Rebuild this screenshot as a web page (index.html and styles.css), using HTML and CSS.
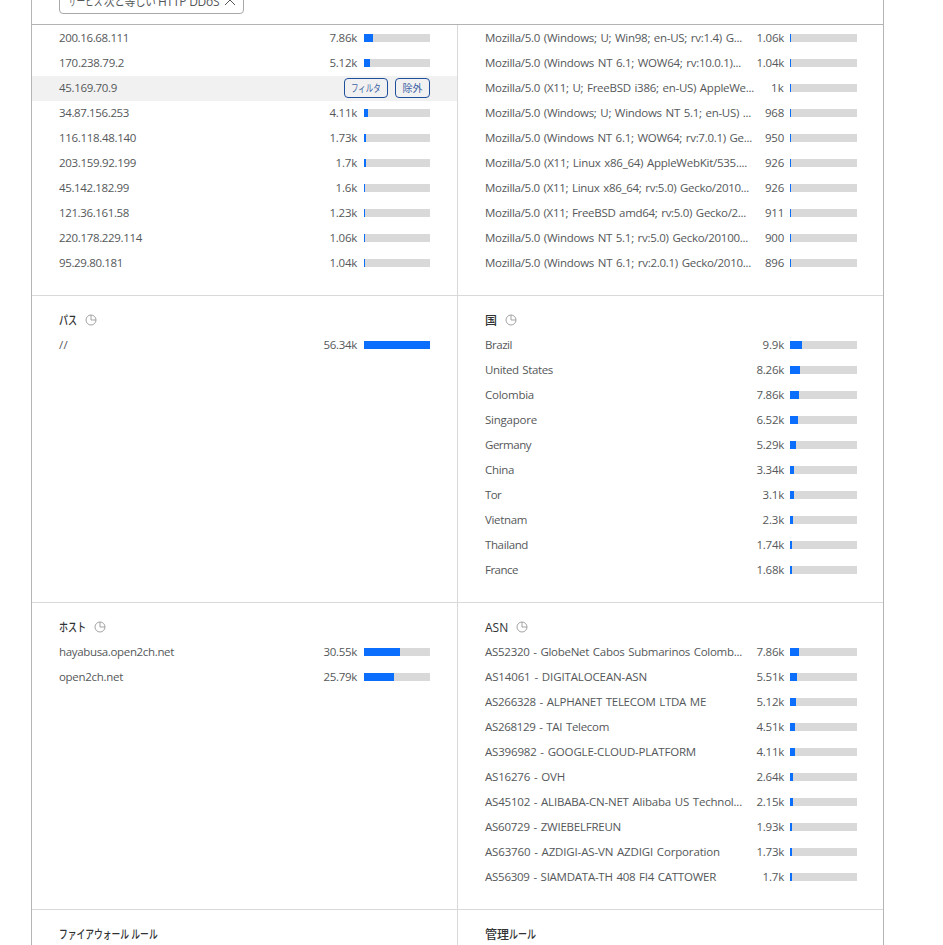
FILE: index.html
```
<!DOCTYPE html>
<html lang="ja">
<head>
<meta charset="utf-8">
<title>Firewall events</title>
<link rel="stylesheet" href="styles.css">
</head>
<body>
<main class="card">
<header class="filters"><span class="chip"><span class="chip-label"><span class="service">サービス</span><span class="operator">次と等しい</span><span>HTTP DDoS</span></span><svg class="close" viewBox="0 0 12 12"><path d="M1 1l10 10M11 1L1 11"/></svg></span></header>
<div class="grid">
<section class="panel first" data-list="ip"></section>
<section class="panel first" data-list="ua"></section>
<section class="panel" data-list="path"><h2><span class="kana path">パス</span><svg class="pie" viewBox="0 0 12 12"><circle cx="6" cy="6" r="5"/><path d="M6 1V6H11"/></svg></h2></section>
<section class="panel" data-list="country"><h2><span>国</span><svg class="pie" viewBox="0 0 12 12"><circle cx="6" cy="6" r="5"/><path d="M6 1V6H11"/></svg></h2></section>
<section class="panel" data-list="host"><h2><span class="kana host">ホスト</span><svg class="pie" viewBox="0 0 12 12"><circle cx="6" cy="6" r="5"/><path d="M6 1V6H11"/></svg></h2></section>
<section class="panel" data-list="asn"><h2><span>ASN</span><svg class="pie" viewBox="0 0 12 12"><circle cx="6" cy="6" r="5"/><path d="M6 1V6H11"/></svg></h2></section>
<section class="panel"><h2><span class="kana firewall">ファイアウォール ルール</span></h2></section>
<section class="panel"><h2><span>管理</span><span class="kana rule">ルール</span></h2></section>
</div>
</main>
<script src="app.js"></script>
</body>
</html>
```
FILE: styles.css
```
* { box-sizing: border-box; }
body { margin: 0; height: 945px; overflow: hidden; background: #fff; color: #55585a; font: 11.5px/23px "Open Sans", "Noto Sans CJK JP", sans-serif; }
.card { width: 853px; height: 945px; margin-left: 31px; border: solid #b5b5b5; border-width: 0 1px; overflow: hidden; }
.filters { display: flex; align-items: flex-end; height: 25px; padding: 0 0 10px 27px; border-bottom: 1px solid #b3b3b3; }
.chip { display: flex; flex: none; align-items: center; justify-content: space-between; width: 185px; height: 28px; padding: 2px 7px 0 8px; border: 1px solid #a8a8a8; border-radius: 4px; }
.chip-label { display: flex; flex: none; width: 149px; font-size: 12px; line-height: 23px; letter-spacing: -.25px; white-space: nowrap; }
.chip-label span { display: block; flex: none; transform-origin: left; }
.chip-label .service { width: 36px; transform: scaleX(.73); }
.chip-label .operator { width: 54px; transform: scaleX(.88); }
.close { width: 12px; height: 12px; margin-top: -2px; fill: none; stroke: #555; stroke-width: 1; }
.grid { display: grid; grid-template-columns: 426px 425px; }
.panel { height: 307px; padding-top: 12px; border-bottom: 1px solid #d9d9d9; }
.panel.first { height: 271px; padding-top: 1px; }
.panel:nth-child(odd) { border-right: 1px solid #d9d9d9; }
h2 { display: flex; align-items: center; height: 25px; margin: 0; padding-left: 27px; color: #303234; font-size: 12px; line-height: 25px; font-weight: 500; white-space: nowrap; }
.kana { transform-origin: left; transform: scaleX(.75); }
.path { width: 18px; }
.host { width: 27px; }
.firewall { width: 99px; transform: scaleX(.73); }
.rule { width: 27px; }
.pie { width: 12px; height: 12px; margin: -1px 0 0 7.5px; fill: none; stroke: #999; stroke-width: .9; }
.row { display: flex; align-items: center; height: 25px; padding: 0 27px 2px; }
.panel:nth-child(even) .row { padding: 0 26px 2px 27px; }
.name { flex: 1; min-width: 0; white-space: nowrap; word-spacing: 1px; }
.value { margin: 0 7px; white-space: nowrap; }
.name span, .value span { display: inline-block; }
.panel:nth-child(even) .value { margin-right: 6px; }
.bar { flex: none; width: 66px; height: 8px; margin-top: 1px; background: #d9d9d9; }
.panel:nth-child(even) .bar { width: 67px; }
.fill { height: 8px; background: #0b6efd; }
.hover { background: #f1f1f1; }
.action { display: flex; align-items: center; justify-content: center; width: 44px; height: 20px; margin-top: 1px; border: 1px solid #1d4f9c; border-radius: 4px; color: #3b62a5; font-size: 10px; white-space: nowrap; }
.action + .action { width: 35px; margin-left: 7px; }
.action .narrow { transform: scaleX(.75); }
```
FILE: app.js
```
const lists = {
  ip: [["200.16.68.111","7.86k",9,70],["170.238.79.2","5.12k",6,65],["45.169.70.9"],["34.87.156.253","4.11k",4,70],["116.118.48.140","1.73k",2,77],["203.159.92.199","1.7k",2,77],["45.142.182.99","1.6k",1,70],["121.36.161.58","1.23k",1,70],["220.178.229.114","1.06k",1,83],["95.29.80.181","1.04k",1,64]],
  ua: [["Mozilla/5.0 (Windows; U; Win98; en-US; rv:1.4) G...","1.06k",1,257],["Mozilla/5.0 (Windows NT 6.1; WOW64; rv:10.0.1)...","1.04k",1,256],["Mozilla/5.0 (X11; U; FreeBSD i386; en-US) AppleWe...","1k",1,269],["Mozilla/5.0 (Windows; U; Windows NT 5.1; en-US) ...","968",1,266],["Mozilla/5.0 (Windows NT 6.1; WOW64; rv:7.0.1) Ge...","950",1,267],["Mozilla/5.0 (X11; Linux x86_64) AppleWebKit/535....","926",1,262],["Mozilla/5.0 (X11; Linux x86_64; rv:5.0) Gecko/2010...","926",1,264],["Mozilla/5.0 (X11; FreeBSD amd64; rv:5.0) Gecko/2...","911",1,261],["Mozilla/5.0 (Windows NT 5.1; rv:5.0) Gecko/20100...","900",1,263],["Mozilla/5.0 (Windows NT 6.1; rv:2.0.1) Gecko/2010...","896",1,266]],
  path: [["//","56.34k",66,9]],
  country: [["Brazil","9.9k",12,27],["United States","8.26k",10,68],["Colombia","7.86k",9,49],["Singapore","6.52k",8,52],["Germany","5.29k",6,46],["China","3.34k",4,29],["Tor","3.1k",4,16],["Vietnam","2.3k",3,42],["Thailand","1.74k",2,43],["France","1.68k",2,33]],
  host: [["hayabusa.open2ch.net","30.55k",36,115],["open2ch.net","25.79k",30,64]],
  asn: [["AS52320 - GlobeNet Cabos Submarinos Colomb...","7.86k",9,257],["AS14061 - DIGITALOCEAN-ASN","5.51k",7,162],["AS266328 - ALPHANET TELECOM LTDA ME","5.12k",6,221],["AS268129 - TAI Telecom","4.51k",5,124],["AS396982 - GOOGLE-CLOUD-PLATFORM","4.11k",5,211],["AS16276 - OVH","2.64k",3,80],["AS45102 - ALIBABA-CN-NET Alibaba US Technol...","2.15k",3,257],["AS60729 - ZWIEBELFREUN","1.93k",2,136],["AS63760 - AZDIGI-AS-VN AZDIGI Corporation","1.73k",2,235],["AS56309 - SIAMDATA-TH 408 FI4 CATTOWER","1.7k",2,231]]
};
const valueWidth = { "56.34k": 33.5, "30.55k": 33.5, "25.79k": 33.5, "1k": 13 };
function fit(el, width) {
  const spacing = (width - el.getBoundingClientRect().width) / el.textContent.length;
  el.style.letterSpacing = spacing + "px";
}
for (const panel of document.querySelectorAll("[data-list]")) {
  for (const [name, value, fill, width] of lists[panel.dataset.list]) {
    const row = document.createElement("div");
    row.className = value ? "row" : "row hover";
    row.innerHTML = `<div class="name"><span>${name}</span></div>` + (value
      ? `<div class="value"><span>${value}</span></div><div class="bar"><div class="fill" style="width:${fill}px"></div></div>`
      : `<span class="action"><span class="narrow">フィルタ</span></span><span class="action">除外</span>`);
    panel.append(row);
    fit(row.querySelector(".name span"), width || 58);
    if (value) fit(row.querySelector(".value span"), valueWidth[value] || (value.length === 5 ? 27.5 : value.length === 4 ? 21.5 : 19));
  }
}
```
